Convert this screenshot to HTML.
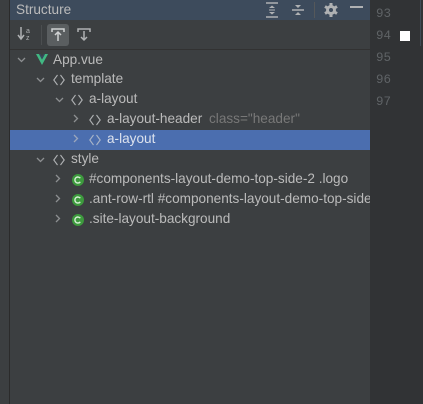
<!DOCTYPE html>
<html><head><meta charset="utf-8"><style>
*{margin:0;padding:0;box-sizing:border-box}
body{width:423px;height:404px;overflow:hidden;background:#3c3f41;font-family:"Liberation Sans","DejaVu Sans",sans-serif;position:relative}
.abs{position:absolute}
.t{position:absolute;font-size:13.6px;color:#bbbbbb;white-space:nowrap;line-height:20px}
svg{position:absolute;overflow:visible}
.ln{position:absolute;left:376px;font-size:12.5px;color:#5f6366;font-family:"Liberation Mono","DejaVu Sans Mono",monospace}
</style></head><body>
<div class="abs" style="left:9px;top:0;width:1px;height:404px;background:#2b2b2b"></div>
<div class="abs" style="left:10px;top:0;width:360px;height:20px;background:#3d4b5c"></div>
<div class="t" style="left:16px;top:0;color:#bbbbbb;font-size:13.6px">Structure</div>
<svg style="left:264px;top:2px" width="16" height="16"><g stroke="#afb1b3" stroke-width="1.5" fill="none"><line x1="2" y1="1" x2="14" y2="1"/><line x1="2" y1="15" x2="14" y2="15"/></g><path d="M5 6 L8 3.5 L11 6Z M5 10 L8 12.5 L11 10Z" fill="#afb1b3"/><line x1="5" y1="8" x2="11" y2="8" stroke="#afb1b3" stroke-width="1"/></svg>
<svg style="left:290px;top:2px" width="16" height="16"><g stroke="#afb1b3" stroke-width="1.5"><line x1="2" y1="8" x2="14" y2="8"/></g><path d="M5 3 L11 3 L8 6Z M5 13 L11 13 L8 10Z" fill="#afb1b3"/></svg>
<div class="abs" style="left:314px;top:2px;width:1px;height:16px;background:#55585a"></div>
<svg style="left:323px;top:2px" width="16" height="16"><circle cx="8" cy="8" r="5" fill="#afb1b3"/><g stroke="#afb1b3" stroke-width="3"><line x1="8" y1="1" x2="8" y2="15"/><line x1="2" y1="4.5" x2="14" y2="11.5"/><line x1="2" y1="11.5" x2="14" y2="4.5"/></g><circle cx="8" cy="8" r="2" fill="#3d4b5c"/></svg>
<div class="abs" style="left:350px;top:6px;width:13px;height:2px;background:#afb1b3"></div>
<div class="abs" style="left:10px;top:49px;width:360px;height:1px;background:#323232"></div>
<svg style="left:18px;top:26px" width="16" height="16"><line x1="3" y1="1" x2="3" y2="12" stroke="#afb1b3" stroke-width="1.5"/><path d="M0 9 L3 13 L6 9" stroke="#afb1b3" stroke-width="1.5" fill="none"/><text x="8" y="7" font-size="7" fill="#afb1b3" font-family="Liberation Sans">a</text><text x="8" y="14" font-size="7" fill="#afb1b3" font-family="Liberation Sans">z</text></svg>
<div class="abs" style="left:41px;top:25px;width:1px;height:20px;background:#4b4e50"></div>
<div class="abs" style="left:47px;top:24px;width:22px;height:22px;background:#5a5e60;border-radius:3px"></div>
<svg style="left:50px;top:27px" width="16" height="16"><g stroke="#d0d2d3" stroke-width="1.5" fill="none"><path d="M2 5 L2 2 L14 2 L14 5"/><line x1="8" y1="5" x2="8" y2="14"/><path d="M5 8 L8 5 L11 8"/></g></svg>
<svg style="left:76px;top:27px" width="16" height="16"><g stroke="#afb1b3" stroke-width="1.5" fill="none"><path d="M2 5 L2 2 L14 2 L14 5"/><line x1="8" y1="4" x2="8" y2="13"/><path d="M5 10 L8 13 L11 10"/></g></svg>

<svg style="left:17px;top:56px" width="10" height="8"><path d="M1 2 L4.5 5.5 L8 2" stroke="#8c8f91" stroke-width="1.3" fill="none"/></svg>
<svg style="left:36px;top:54px" width="12" height="12"><path d="M0 0 L6 11 L12 0 L9 0 L6 5.5 L3 0Z" fill="#41b883"/><path d="M3 0 L6 5.5 L9 0 L7.5 0 L6 2.5 L4.5 0Z" fill="#35495e"/></svg>
<div class="t" style="left:53px;top:50px">App.vue</div>

<svg style="left:36px;top:76px" width="10" height="8"><path d="M1 2 L4.5 5.5 L8 2" stroke="#8c8f91" stroke-width="1.3" fill="none"/></svg>
<svg style="left:53px;top:74px" width="12" height="12"><path d="M4.5 1 L0.8 6 L4.5 11 M7.5 1 L11.2 6 L7.5 11" stroke="#afb1b3" stroke-width="1.1" fill="none"/></svg>
<div class="t" style="left:71px;top:69px">template</div>

<svg style="left:55px;top:96px" width="10" height="8"><path d="M1 2 L4.5 5.5 L8 2" stroke="#8c8f91" stroke-width="1.3" fill="none"/></svg>
<svg style="left:71px;top:94px" width="12" height="12"><path d="M4.5 1 L0.8 6 L4.5 11 M7.5 1 L11.2 6 L7.5 11" stroke="#afb1b3" stroke-width="1.1" fill="none"/></svg>
<div class="t" style="left:89px;top:89px">a-layout</div>

<svg style="left:72px;top:114px" width="8" height="10"><path d="M2 1 L5.5 4.5 L2 8" stroke="#8c8f91" stroke-width="1.3" fill="none"/></svg>
<svg style="left:89px;top:114px" width="12" height="12"><path d="M4.5 1 L0.8 6 L4.5 11 M7.5 1 L11.2 6 L7.5 11" stroke="#afb1b3" stroke-width="1.1" fill="none"/></svg>
<div class="t" style="left:107px;top:109px">a-layout-header <span style="color:#787878;margin-left:3px">class="header"</span></div>

<div class="abs" style="left:10px;top:130px;width:360px;height:20px;background:#4b6eaf"></div>
<svg style="left:72px;top:134px" width="8" height="10"><path d="M2 1 L5.5 4.5 L2 8" stroke="#9aa6bc" stroke-width="1.3" fill="none"/></svg>
<svg style="left:89px;top:134px" width="12" height="12"><path d="M4.5 1 L0.8 6 L4.5 11 M7.5 1 L11.2 6 L7.5 11" stroke="#a9b5c8" stroke-width="1.1" fill="none"/></svg>
<div class="t" style="left:107px;top:129px;color:#dde3ee">a-layout</div>

<svg style="left:36px;top:156px" width="10" height="8"><path d="M1 2 L4.5 5.5 L8 2" stroke="#8c8f91" stroke-width="1.3" fill="none"/></svg>
<svg style="left:53px;top:154px" width="12" height="12"><path d="M4.5 1 L0.8 6 L4.5 11 M7.5 1 L11.2 6 L7.5 11" stroke="#afb1b3" stroke-width="1.1" fill="none"/></svg>
<div class="t" style="left:71px;top:149px">style</div>

<svg style="left:54px;top:174px" width="8" height="10"><path d="M2 1 L5.5 4.5 L2 8" stroke="#8c8f91" stroke-width="1.3" fill="none"/></svg>
<svg style="left:72px;top:174px" width="12" height="12"><circle cx="6" cy="6" r="6" fill="#3d9a3d"/><path d="M8.3 4.2 A3 3 0 1 0 8.3 7.8" stroke="#d6efd6" stroke-width="1.4" fill="none"/></svg>
<div class="t" style="left:89px;top:169px">#components-layout-demo-top-side-2 .logo</div>

<svg style="left:54px;top:194px" width="8" height="10"><path d="M2 1 L5.5 4.5 L2 8" stroke="#8c8f91" stroke-width="1.3" fill="none"/></svg>
<svg style="left:72px;top:194px" width="12" height="12"><circle cx="6" cy="6" r="6" fill="#3d9a3d"/><path d="M8.3 4.2 A3 3 0 1 0 8.3 7.8" stroke="#d6efd6" stroke-width="1.4" fill="none"/></svg>
<div class="t" style="left:89px;top:189px;width:281px;overflow:hidden">.ant-row-rtl #components-layout-demo-top-side</div>

<svg style="left:54px;top:214px" width="8" height="10"><path d="M2 1 L5.5 4.5 L2 8" stroke="#8c8f91" stroke-width="1.3" fill="none"/></svg>
<svg style="left:72px;top:214px" width="12" height="12"><circle cx="6" cy="6" r="6" fill="#3d9a3d"/><path d="M8.3 4.2 A3 3 0 1 0 8.3 7.8" stroke="#d6efd6" stroke-width="1.4" fill="none"/></svg>
<div class="t" style="left:89px;top:209px">.site-layout-background</div>

<div class="abs" style="left:370px;top:0;width:53px;height:404px;background:#313335"></div>
<div class="abs" style="left:420px;top:0;width:1px;height:46px;background:#3f4a55"></div>
<div class="ln" style="top:7px">93</div>
<div class="ln" style="top:29px">94</div>
<div class="ln" style="top:51px">95</div>
<div class="ln" style="top:73px">96</div>
<div class="ln" style="top:95px">97</div>
<div class="abs" style="left:400px;top:31px;width:10px;height:10px;background:#ffffff"></div>
</body></html>
